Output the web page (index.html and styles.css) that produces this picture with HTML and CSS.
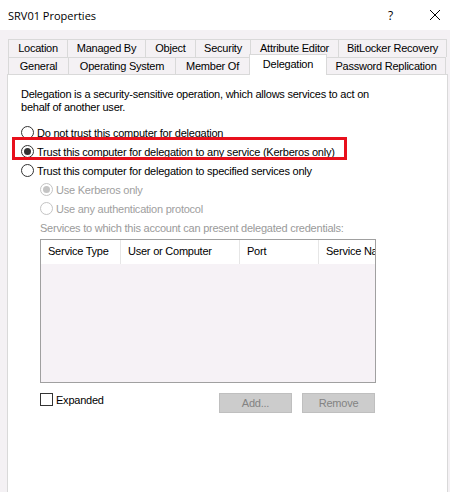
FILE: index.html
```html
<!DOCTYPE html>
<html>
<head>
<meta charset="utf-8">
<link rel="stylesheet" href="styles.css">
</head>
<body>
<div class="window">
  <div class="titlebar">
    <span class="title">SRV01 Properties</span>
    <span class="help">?</span>
    <span class="close"><svg width="12" height="12" viewBox="0 0 12 12"><path d="M1 1L11 11M11 1L1 11" stroke="#000" stroke-width="1" fill="none"/></svg></span>
  </div>
  <div class="frame">
    <div class="tabs">
      <div class="tabrow row1">
        <div class="tab t-location">Location</div>
        <div class="tab t-managed">Managed By</div>
        <div class="tab t-object">Object</div>
        <div class="tab t-security">Security</div>
        <div class="tab t-attr">Attribute Editor</div>
        <div class="tab t-bitlocker last">BitLocker Recovery</div>
      </div>
      <div class="tabrow row2">
        <div class="tab t-general">General</div>
        <div class="tab t-os">Operating System</div>
        <div class="tab t-member">Member Of</div>
        <div class="tab t-delegation active">Delegation</div>
        <div class="tab t-password last">Password Replication</div>
      </div>
    </div>
    <div class="panel">
      <p class="desc">Delegation is a security-sensitive operation, which allows services to act on behalf of another user.</p>
      <div class="options">
        <div class="radio"><span class="rb"></span><span>Do not trust this computer for delegation</span></div>
        <div class="radio checked marked"><span class="rb"></span><span>Trust this computer for delegation to any service (Kerberos only)</span><span class="highlight"></span></div>
        <div class="radio"><span class="rb"></span><span>Trust this computer for delegation to specified services only</span></div>
        <div class="indent">
          <div class="radio disabled checked"><span class="rb"></span><span>Use Kerberos only</span></div>
          <div class="radio disabled"><span class="rb"></span><span>Use any authentication protocol</span></div>
          <div class="services-label">Services to which this account can present delegated credentials:</div>
          <div class="list">
            <div class="list-header">
              <div class="col c1">Service Type</div>
              <div class="col c2">User or Computer</div>
              <div class="col c3">Port</div>
              <div class="col c4">Service Name</div>
            </div>
            <div class="list-body"></div>
          </div>
          <div class="actions">
            <div class="check"><span class="cb"></span><span>Expanded</span></div>
            <div class="buttons">
              <div class="btn">Add...</div>
              <div class="btn">Remove</div>
            </div>
          </div>
        </div>
      </div>
    </div>
  </div>
</div>
</body>
</html>
```

FILE: styles.css
```css
* { box-sizing: border-box; }
html, body {
  margin: 0;
  padding: 0;
  width: 450px;
  height: 492px;
  overflow: hidden;
  background: #f4f1f4;
}
.window {
  width: 450px;
  height: 492px;
  font-family: "Liberation Sans", Arial, sans-serif;
  font-size: 11px;
  letter-spacing: -0.23px;
  color: #000;
}
.titlebar {
  height: 30px;
  background: #fff;
  display: flex;
  align-items: center;
  letter-spacing: 0;
}
.title {
  font-family: "Open Sans", "Noto Sans", sans-serif;
  font-size: 11px;
  padding-left: 8px;
  flex: 1;
}
.help {
  font-family: "Open Sans", sans-serif;
  font-size: 12px;
  width: 41px;
  text-align: left;
}
.close {
  width: 20px;
  margin-right: 1px;
  display: flex;
  align-items: center;
}
.frame {
  padding: 9px 2px 0 7px;
  background: #f4f1f4;
}
.tabs {
  margin-left: 1px;
}
.tabrow {
  display: flex;
}
.row1 { height: 18px; }
.row2 { height: 17px; }
.tab {
  border-top: 1px solid #d9d9d9;
  border-left: 1px solid #d9d9d9;
  background: #f4f1f4;
  text-align: center;
  line-height: 16px;
  white-space: nowrap;
  flex: none;
}
.tab.last { border-right: 1px solid #d9d9d9; }
.row1 .tab { height: 18px; }
.row2 .tab { height: 17px; }
.tab.active {
  background: #fff;
  height: 21px;
  margin-top: -3px;
  position: relative;
  z-index: 2;
  border-right: 1px solid #d9d9d9;
  margin-right: -1px;
  line-height: 18px;
}
.t-location { width: 59px; }
.t-managed { width: 78px; }
.t-object { width: 50px; }
.t-security { width: 55px; }
.t-attr { width: 88px; }
.t-bitlocker { width: 109px; }
.t-general { width: 60px; }
.t-os { width: 107px; }
.t-member { width: 74px; }
.t-delegation { width: 78px; }
.t-password { width: 120px; }

.panel {
  background: #fff;
  border: 1px solid #d9d9d9;
  height: 440px;
  padding: 13px 13px 0 13px;
  position: relative;
  z-index: 1;
}
.desc {
  margin: 0;
  line-height: 13px;
  width: 360px;
}
.options {
  margin-top: 9px;
}
.radio {
  height: 19px;
  display: flex;
  align-items: center;
  position: relative;
  white-space: nowrap;
}
.rb {
  width: 13px;
  height: 13px;
  border: 1px solid #333;
  border-radius: 50%;
  background: #fff;
  margin-right: 3px;
  display: flex;
  align-items: center;
  justify-content: center;
  flex: none;
}
.radio.checked .rb::after {
  content: "";
  width: 7px;
  height: 7px;
  border-radius: 50%;
  background: #333;
}
.radio.disabled { color: #a0a0a0; }
.radio.disabled .rb { border-color: #c4c4c4; background: #fff; }
.radio.disabled.checked .rb::after { background: #c4c4c4; }
.highlight {
  position: absolute;
  left: -9px;
  top: -5px;
  width: 335px;
  height: 23px;
  border: 3px solid #e8101c;
}
.indent {
  padding-left: 19px;
}
.services-label {
  color: #9a9a9a;
  margin-top: 3px;
  line-height: 15px;
  white-space: nowrap;
}
.list {
  margin-top: 3px;
  width: 336px;
  height: 144px;
  border: 1px solid #a0a0a0;
  background: #f6f2f6;
  display: flex;
  flex-direction: column;
  overflow: hidden;
}
.list-header {
  height: 24px;
  background: #fff;
  display: flex;
  flex: none;
}
.col {
  padding-left: 7px;
  line-height: 23px;
  white-space: nowrap;
  overflow: hidden;
  border-right: 1px solid #e6e6e6;
  flex: none;
}
.c1 { width: 80px; }
.c2 { width: 119px; }
.c3 { width: 79px; }
.c4 { width: 56px; border-right: none; }
.list-body { flex: 1; }
.actions {
  display: flex;
  justify-content: space-between;
  width: 335px;
  margin-top: 10px;
}
.check {
  display: flex;
  align-items: center;
  height: 13px;
  gap: 3px;
}
.cb {
  width: 13px;
  height: 13px;
  border: 1px solid #333;
  background: #fff;
  flex: none;
}
.buttons {
  display: flex;
  gap: 10px;
}
.btn {
  width: 73px;
  height: 20px;
  background: #cccccc;
  border: 1px solid #bfbfbf;
  color: #838383;
  text-align: center;
  line-height: 18px;
}
```
